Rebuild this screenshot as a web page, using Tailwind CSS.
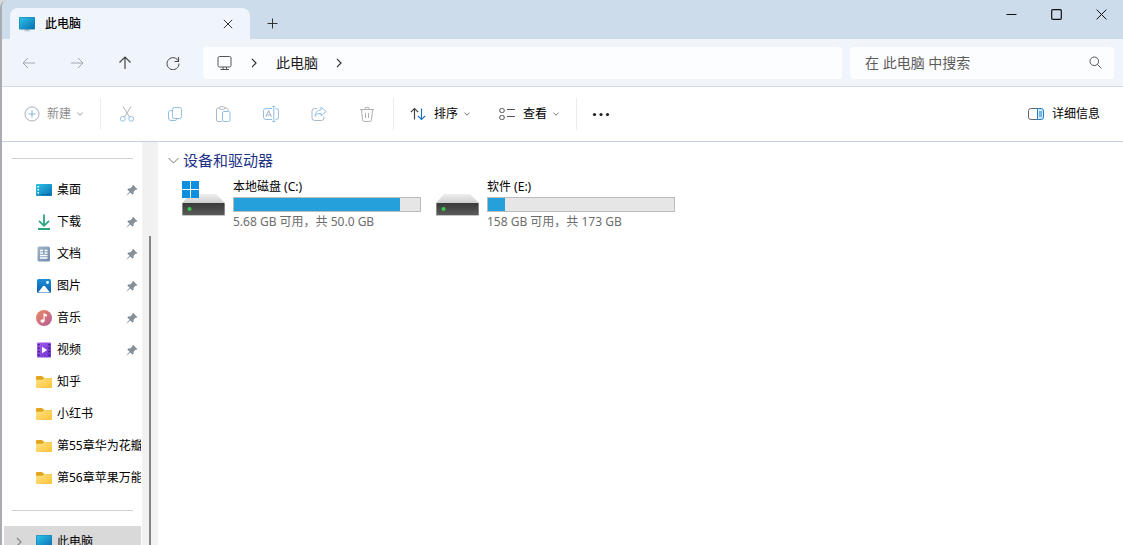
<!DOCTYPE html>
<html lang="zh-CN">
<head>
<meta charset="utf-8">
<title>此电脑</title>
<script src="https://cdn.jsdelivr.net/npm/@tailwindcss/browser@4"></script>
</head>
<body class="h-screen overflow-hidden bg-[#d5dbe0] font-['Noto_Sans','Noto_Sans_CJK_SC',sans-serif] text-xs text-[#1b1b1b]">

<svg class="absolute size-0" aria-hidden="true">
  <defs>
    <linearGradient id="screen" x1="0" y1="0" x2="1" y2="1"><stop offset="0" stop-color="#2cc3e6"/><stop offset="1" stop-color="#0a6fb4"/></linearGradient>
    <linearGradient id="doc" x1="0" y1="0" x2="1" y2="1"><stop offset="0" stop-color="#a3b6cb"/><stop offset="1" stop-color="#6f8baa"/></linearGradient>
    <linearGradient id="pic" x1="0" y1="0" x2="0" y2="1"><stop offset="0" stop-color="#1b8fdc"/><stop offset="1" stop-color="#0b5ea8"/></linearGradient>
    <linearGradient id="music" x1="0" y1="0" x2="1" y2="1"><stop offset="0" stop-color="#ee8b62"/><stop offset="1" stop-color="#b35a93"/></linearGradient>
    <linearGradient id="video" x1="0" y1="0" x2="1" y2="1"><stop offset="0" stop-color="#a65bf0"/><stop offset="1" stop-color="#6d35cf"/></linearGradient>
    <linearGradient id="fold" x1="0" y1="0" x2="1" y2="1"><stop offset="0" stop-color="#ffe28a"/><stop offset="1" stop-color="#fbc232"/></linearGradient>
    <linearGradient id="lid" x1="0" y1="0" x2="0" y2="1"><stop offset="0" stop-color="#eeeeee"/><stop offset="1" stop-color="#cfcfcf"/></linearGradient>
    <linearGradient id="box" x1="0" y1="0" x2="0" y2="1"><stop offset="0" stop-color="#3a3a3a"/><stop offset="1" stop-color="#5a5a5a"/></linearGradient>
    <symbol id="i-pc" viewBox="0 0 16 16"><path fill="#b9c4cc" d="M6 13h4v1.500h1.500v.8h-7v-.8H6z"/><rect y="1" width="16" height="12.500" rx="1" fill="#1580ae"/><rect x=".6" y="1.600" width="14.800" height="11.300" rx=".5" fill="url(#screen)"/></symbol>
    <symbol id="i-folder" viewBox="0 0 16 16"><path fill="#e3a51a" d="M0 3q0-1 1-1h4.700q.6 0 1 .5L8 4h7q1 0 1 1v4H0z"/><path fill="url(#fold)" d="M0 6.500q0-.8.8-.8h5.400L8 4.300h7.200q.8 0 .8.8v8q0 1-1 1H1q-1 0-1-1z"/></symbol>
    <symbol id="i-pin" viewBox="0 0 12 12"><path fill="#84919a" d="M7 .8 11.200 5 10.300 5.900 9.500 5.700 7.700 7.600 7.500 9.800 6.600 10.700 4.300 8.400.8 11.500.5 11.200 3.600 7.700 1.300 5.400 2.200 4.500 4.500 4.300 6.300 2.500 6.100 1.700z"/></symbol>
    <symbol id="i-down" viewBox="0 0 8 8"><path fill="none" stroke="currentColor" d="M1.500 2.800 4 5.200l2.500-2.400"/></symbol>
    <symbol id="i-drive" viewBox="0 0 43 22"><path fill="url(#lid)" d="M8 0h26l9 9H0z"/><rect y="9" width="43" height="13" rx="1" fill="#c6c6c6"/><rect x=".5" y="9" width="42" height="12" rx=".5" fill="url(#box)"/><circle cx="7.500" cy="15" r="2" fill="#35d04a"/></symbol>
  </defs>
</svg>

<div class="flex h-full flex-col overflow-hidden rounded-tl-lg border-l-2 border-[#a9adb1] bg-white">

  <header class="flex h-[39px] shrink-0 items-start bg-[#cddceb]">
    <div class="ml-2 mt-2 flex h-[31px] w-60 items-center rounded-t-lg bg-[#f0f5fb] pl-[9px] pr-[14px]">
      <svg class="size-4" aria-hidden="true"><use href="#i-pc"/></svg>
      <span class="ml-[10px] flex-1 font-medium text-black">此电脑</span>
      <button type="button" aria-label="关闭标签页" class="flex size-4 items-center justify-center">
        <svg class="size-[10px]" viewBox="0 0 10 10" fill="none" stroke="#333"><path d="m.8.8 8.400 8.400m0-8.400L.8 9.200"/></svg>
      </button>
    </div>
    <button type="button" aria-label="新标签页" class="ml-[6px] mt-2 flex h-[31px] w-8 items-center justify-center">
      <svg class="size-[11px]" viewBox="0 0 11 11" fill="none" stroke="#333"><path d="M5.500.5v10M.5 5.500h10"/></svg>
    </button>
    <div class="-mr-px ml-auto flex">
      <button type="button" aria-label="最小化" class="flex h-7 w-[45px] items-center justify-center"><svg class="size-[11px]" viewBox="0 0 11 11" stroke="#111"><path d="M.5 5.500h10"/></svg></button>
      <button type="button" aria-label="最大化" class="flex h-7 w-[45px] items-center justify-center"><svg class="size-[11px]" viewBox="0 0 11 11" fill="none" stroke="#111" stroke-width="1.200"><rect x=".7" y=".7" width="9.600" height="9.600" rx="1"/></svg></button>
      <button type="button" aria-label="关闭" class="flex h-7 w-[45px] items-center justify-center"><svg class="size-[11px]" viewBox="0 0 11 11" fill="none" stroke="#111"><path d="m.6.6 9.800 9.800m0-9.800L.6 10.400"/></svg></button>
    </div>
  </header>

  <div class="flex h-12 shrink-0 items-center border-b border-[#d3dae1] bg-[#f0f5fb] pl-[3px] pr-[9px]">
    <button type="button" aria-label="后退" disabled class="flex h-8 w-12 items-center justify-center"><svg class="size-[14px]" viewBox="0 0 14 14" fill="none" stroke="#a3a8ad"><path d="M13 7H1m5-5L1 7l5 5"/></svg></button>
    <button type="button" aria-label="前进" disabled class="flex h-8 w-12 items-center justify-center"><svg class="size-[14px]" viewBox="0 0 14 14" fill="none" stroke="#a3a8ad"><path d="M1 7h12M8 2l5 5-5 5"/></svg></button>
    <button type="button" aria-label="向上" class="flex h-8 w-12 items-center justify-center"><svg class="size-[14px]" viewBox="0 0 14 14" fill="none" stroke="#444" stroke-width="1.200"><path d="M7 13V1M1.500 6.500 7 1l5.500 5.500"/></svg></button>
    <button type="button" aria-label="刷新" class="flex h-8 w-12 items-center justify-center"><svg class="size-[14px]" viewBox="0 0 14 14" fill="none" stroke="#444"><path d="M12.600 5.500A6 6 0 1 0 13 7.500M12.600 1v4.500H8.500"/></svg></button>
    <nav aria-label="地址" class="ml-[6px] flex h-8 flex-1 items-center rounded bg-[#fcfdfe] pl-[14px] text-sm">
      <svg class="size-4" viewBox="0 0 16 16" fill="none" stroke="#555" aria-hidden="true"><rect x="1" y="1.500" width="13" height="10.500" rx="1.500"/><path d="M6 12v2.500m3.500-2.500v2.500M3.500 14.500H12"/></svg>
      <svg class="ml-4 size-[10px]" viewBox="0 0 10 10" fill="none" stroke="#333" stroke-width="1.200" aria-hidden="true"><path d="m3 .8 4 4.200-4 4.200"/></svg>
      <a href="#" class="ml-[17px]">此电脑</a>
      <svg class="ml-4 size-[10px]" viewBox="0 0 10 10" fill="none" stroke="#333" stroke-width="1.200" aria-hidden="true"><path d="m3 .8 4 4.200-4 4.200"/></svg>
    </nav>
    <div class="ml-2 flex h-8 w-[264px] items-center rounded bg-[#fcfdfe] pl-[15px] pr-3">
      <input type="text" aria-label="搜索" placeholder="在 此电脑 中搜索" class="min-w-0 flex-1 text-sm outline-none placeholder:text-[#5c5c5c]">
      <svg class="size-[13px]" viewBox="0 0 13 13" fill="none" stroke="#555" aria-hidden="true"><circle cx="5.300" cy="5.300" r="4.300"/><path d="m8.400 8.400 4 4"/></svg>
    </div>
  </div>

  <div role="toolbar" aria-label="命令" class="flex h-[55px] shrink-0 items-center border-b border-[#c3d1df] pl-[22px] pr-[23px]">
    <button type="button" disabled class="flex items-center text-[#8e8e8e]">
      <svg class="size-4" viewBox="0 0 16 16" fill="none" stroke="#a9b0b6"><circle cx="8" cy="8" r="7"/><path stroke="#7fb1dc" d="M8 4.500v7M4.500 8h7"/></svg>
      <span class="ml-[7px] mr-[5px]">新建</span>
      <svg class="size-2"><use href="#i-down"/></svg>
    </button>
    <span class="ml-4 h-8 w-px bg-[#e9ebed]"></span>
    <button type="button" disabled aria-label="剪切" class="ml-[2px] flex w-12 justify-center"><svg class="size-4" viewBox="0 0 16 16" fill="none" stroke="#b3b6b9"><path d="m4 .5 6.500 10.700M12 .5 5.500 11.200"/><g stroke="#8fbfe6"><circle cx="3.800" cy="12.800" r="2.400"/><circle cx="12.200" cy="12.800" r="2.400"/></g></svg></button>
    <button type="button" disabled aria-label="复制" class="flex w-12 justify-center"><svg class="size-4" viewBox="0 0 16 16" fill="none" stroke="#8fbfe6"><rect x="5.500" y="1.500" width="9" height="11" rx="2"/><path d="M5.500 4.500H4a2.500 2.500 0 0 0-2.500 2.500v5A2.500 2.500 0 0 0 4 14.500h4a2 2 0 0 0 2-2"/></svg></button>
    <button type="button" disabled aria-label="粘贴" class="flex w-12 justify-center"><svg class="size-4" viewBox="0 0 16 16" fill="none" stroke="#b3b6b9"><path d="M7 15.500H3a1.500 1.500 0 0 1-1.500-1.500V3.500A1.500 1.500 0 0 1 3 2h1.500M10 2h1.500A1.500 1.500 0 0 1 13 3.500V5"/><rect x="4.500" y=".7" width="5.500" height="2.600" rx="1.300"/><rect x="7.500" y="5.500" width="7.500" height="10" rx="1.500" stroke="#8fbfe6"/></svg></button>
    <button type="button" disabled aria-label="重命名" class="flex w-12 justify-center"><svg class="size-4" viewBox="0 0 16 16" fill="none" stroke="#8fbfe6"><path d="M9 2.500H3A2.500 2.500 0 0 0 .5 5v6A2.500 2.500 0 0 0 3 13.500h6M12.500 2.500h.5A2.500 2.500 0 0 1 15.500 5v6a2.500 2.500 0 0 1-2.500 2.500h-.5M10.800.5v15M9.300.5h3m-3 15h3"/><path stroke="#a3b4c4" d="m3 11 2.700-6.500L8.400 11M4 9h3.500"/></svg></button>
    <button type="button" disabled aria-label="共享" class="flex w-12 justify-center"><svg class="size-4" viewBox="0 0 16 16" fill="none" stroke="#8fbfe6" stroke-linejoin="round"><path stroke="#a9b7c4" d="M6 2.500H3.500A2.500 2.500 0 0 0 1 5v7a2.500 2.500 0 0 0 2.500 2.500h7A2.500 2.500 0 0 0 13 12v-1.500"/><path d="M10 1.200 15.200 5.500 10 9.800V7.300Q6 7 4 10.300 4.500 4.200 10 3.800z"/></svg></button>
    <button type="button" disabled aria-label="删除" class="flex w-12 justify-center"><svg class="size-4" viewBox="0 0 16 16" fill="none" stroke="#adb0b3"><path d="M1 3.500h14M5.700 3.500a2.300 2.300 0 0 1 4.600 0M2.500 3.500l1 10.300a1.700 1.700 0 0 0 1.700 1.600h5.600a1.700 1.700 0 0 0 1.700-1.600l1-10.300M6.500 7v5M9.500 7v5"/></svg></button>
    <span class="ml-[2px] h-8 w-px bg-[#e9ebed]"></span>
    <button type="button" class="ml-4 flex items-center text-black">
      <svg class="size-4" viewBox="0 0 16 16" fill="none" stroke="#444" stroke-width="1.200"><path d="M4.500 13.500V2.500M.8 6.200l3.700-3.700 3.700 3.700"/><path stroke="#1b74c5" d="M11.500 2.500v11M7.800 9.800l3.700 3.700 3.700-3.700"/></svg>
      <span class="ml-2 mr-[5px]">排序</span>
      <svg class="size-2 text-[#777]"><use href="#i-down"/></svg>
    </button>
    <button type="button" class="ml-7 flex items-center text-black">
      <svg class="size-4" viewBox="0 0 16 16" fill="none" stroke="#555"><rect x=".8" y="2.500" width="4.400" height="4" rx="1.500"/><rect x=".8" y="9.500" width="4.400" height="4" rx="1.500"/><path d="M8 3.500h8M8 10.500h8"/></svg>
      <span class="ml-2 mr-[5px]">查看</span>
      <svg class="size-2 text-[#777]"><use href="#i-down"/></svg>
    </button>
    <span class="ml-4 h-8 w-px bg-[#e9ebed]"></span>
    <button type="button" aria-label="查看更多" class="ml-[14px]"><svg class="size-5" viewBox="0 0 20 20" fill="#222"><circle cx="3.500" cy="10.500" r="1.600"/><circle cx="10" cy="10.500" r="1.600"/><circle cx="16.500" cy="10.500" r="1.600"/></svg></button>
    <button type="button" class="ml-auto flex items-center gap-2 text-black">
      <svg class="size-4" viewBox="0 0 16 16" fill="none"><path stroke="#666" d="M9.500 2.500H3A2.500 2.500 0 0 0 .5 5v6A2.500 2.500 0 0 0 3 13.500h6.500"/><path fill="#d5ebfb" stroke="#1b80cf" d="M9.500 2.500H13A2.500 2.500 0 0 1 15.500 5v6a2.500 2.500 0 0 1-2.500 2.500H9.500zM11 6h3m-3 2h3m-3 2h3"/></svg>
      详细信息
    </button>
  </div>

  <div class="flex min-h-0 flex-1">
    <nav aria-label="导航窗格" class="w-[140px] shrink-0 overflow-hidden pr-px text-black">
      <hr class="ml-[10px] mr-2 mt-4 border-[#d0d0d0]">
      <ul class="mt-[15px]">
        <li><a href="#" class="flex h-8 items-center pl-[34px] pr-[3px]"><svg class="size-4" viewBox="0 0 16 16"><rect y="2" width="16" height="12" rx="1" fill="url(#screen)"/><path fill="#fff" d="M1.500 4h1.500v1.500H1.500zM1.500 7h1.500v1.500H1.500zM1.500 10h1.500v1.500H1.500z"/><path stroke="#0b548c" stroke-dasharray="1.500 1" d="M5 12.500h10"/></svg><span class="ml-[5px] flex-1">桌面</span><svg class="size-3"><use href="#i-pin"/></svg></a></li>
        <li><a href="#" class="flex h-8 items-center pl-[34px] pr-[3px]"><svg class="size-4" viewBox="0 0 16 16" fill="none" stroke="#2aa583" stroke-width="1.800"><path d="M8 .5v11M3 6.800l5 5 5-5M2 15h12"/></svg><span class="ml-[5px] flex-1">下载</span><svg class="size-3"><use href="#i-pin"/></svg></a></li>
        <li><a href="#" class="flex h-8 items-center pl-[34px] pr-[3px]"><svg class="size-4" viewBox="0 0 16 16"><rect x="1.500" y=".5" width="12.500" height="15" rx="1.500" fill="url(#doc)"/><path fill="none" stroke="#fff" stroke-width="1.300" d="M4 4.500h3M4 7h3M8.500 4.500h3M8.500 7h3M4 9.500h7.500M4 12h7.500"/></svg><span class="ml-[5px] flex-1">文档</span><svg class="size-3"><use href="#i-pin"/></svg></a></li>
        <li><a href="#" class="flex h-8 items-center pl-[34px] pr-[3px]"><svg class="size-4" viewBox="0 0 16 16"><rect x="1" y="1" width="14" height="14" rx="1.500" fill="url(#pic)"/><path fill="#fff" d="M2 14.500 7 8.300q1-1 2 0l5 6.200z"/><circle cx="11.500" cy="4.500" r="1.400" fill="#fff"/></svg><span class="ml-[5px] flex-1">图片</span><svg class="size-3"><use href="#i-pin"/></svg></a></li>
        <li><a href="#" class="flex h-8 items-center pl-[34px] pr-[3px]"><svg class="size-4" viewBox="0 0 16 16"><circle cx="8" cy="8" r="8" fill="url(#music)"/><ellipse cx="6.500" cy="11" rx="2" ry="1.700" fill="#fff"/><path fill="#fff" d="M7.500 11V3l3.500 1.800v2L8.700 5.700V11z"/></svg><span class="ml-[5px] flex-1">音乐</span><svg class="size-3"><use href="#i-pin"/></svg></a></li>
        <li><a href="#" class="flex h-8 items-center pl-[34px] pr-[3px]"><svg class="size-4" viewBox="0 0 16 16"><rect x="1" y=".5" width="14" height="15" rx="1" fill="url(#video)"/><path stroke="#3a1a80" stroke-width="1.600" stroke-dasharray="1.600 1.800" d="M2.800 2v13M13.200 2v13"/><path fill="#fff" d="m6 4.800 5.200 3.200L6 11.200z"/></svg><span class="ml-[5px] flex-1">视频</span><svg class="size-3"><use href="#i-pin"/></svg></a></li>
        <li><a href="#" class="flex h-8 items-center pl-[34px]"><svg class="size-4 shrink-0"><use href="#i-folder"/></svg><span class="ml-[5px]">知乎</span></a></li>
        <li><a href="#" class="flex h-8 items-center pl-[34px]"><svg class="size-4 shrink-0"><use href="#i-folder"/></svg><span class="ml-[5px]">小红书</span></a></li>
        <li><a href="#" class="flex h-8 items-center overflow-hidden whitespace-nowrap pl-[34px]"><svg class="size-4 shrink-0"><use href="#i-folder"/></svg><span class="ml-[5px]">第55章华为花瓣</span></a></li>
        <li><a href="#" class="flex h-8 items-center overflow-hidden whitespace-nowrap pl-[34px]"><svg class="size-4 shrink-0"><use href="#i-folder"/></svg><span class="ml-[5px]">第56章苹果万能</span></a></li>
      </ul>
      <hr class="ml-[10px] mr-2 mt-4 border-[#d0d0d0]">
      <a href="#" aria-current="page" class="ml-[2px] mt-[15px] flex h-8 items-center bg-[#d9d9d9] pl-[10px]">
        <svg class="size-[10px]" viewBox="0 0 10 10" fill="none" stroke="#888" stroke-width="1.200"><path d="m3 1 4 4-4 4"/></svg>
        <svg class="ml-3 size-4"><use href="#i-pc"/></svg>
        <span class="ml-[5px]">此电脑</span>
      </a>
    </nav>
    <div aria-hidden="true" class="flex w-4 shrink-0 justify-center bg-[#f1f1f1] pt-[94px]"><span class="w-[2px] bg-[#858585]"></span></div>

    <main class="flex-1 pl-[10px] pt-2">
      <h2 class="flex items-center text-[15px] leading-5 text-[#1e3287]">
        <svg class="mr-1 size-[11px]" viewBox="0 0 11 11" fill="none" stroke="#777" aria-hidden="true"><path d="m.5 3 5 5 5-5"/></svg>
        设备和驱动器
      </h2>
      <div class="ml-[14px] mt-2 flex flex-wrap">
        <section class="flex w-[254px] gap-2">
          <svg class="mt-[3px] h-9 w-[43px] shrink-0" viewBox="0 0 43 36" aria-hidden="true"><use href="#i-drive" y="13" width="43" height="22"/><path fill="#0f8fdf" d="M0 0h8v8H0zM9 0h8v8H9zM0 9h8v8H0zM9 9h8v8H9z"/></svg>
          <div class="w-[188px]">
            <h3 class="h-[19px] leading-[18px] text-black">本地磁盘 (C:)</h3>
            <div role="meter" aria-label="已用空间" aria-valuenow="89" class="h-[15px] border border-[#bcbcbc] bg-[#e6e6e6]"><div class="h-full bg-[#26a0da]" style="width:89.500%"></div></div>
            <p class="leading-5 text-[#6d6d6d]">5.68 GB 可用，共 50.0 GB</p>
          </div>
        </section>
        <section class="flex w-[254px] gap-2">
          <svg class="mt-[3px] h-9 w-[43px] shrink-0" viewBox="0 0 43 36" aria-hidden="true"><use href="#i-drive" y="13" width="43" height="22"/></svg>
          <div class="w-[188px]">
            <h3 class="h-[19px] leading-[18px] text-black">软件 (E:)</h3>
            <div role="meter" aria-label="已用空间" aria-valuenow="9" class="h-[15px] border border-[#bcbcbc] bg-[#e6e6e6]"><div class="h-full bg-[#26a0da]" style="width:9%"></div></div>
            <p class="leading-5 text-[#6d6d6d]">158 GB 可用，共 173 GB</p>
          </div>
        </section>
      </div>
    </main>
  </div>
</div>
</body>
</html>
